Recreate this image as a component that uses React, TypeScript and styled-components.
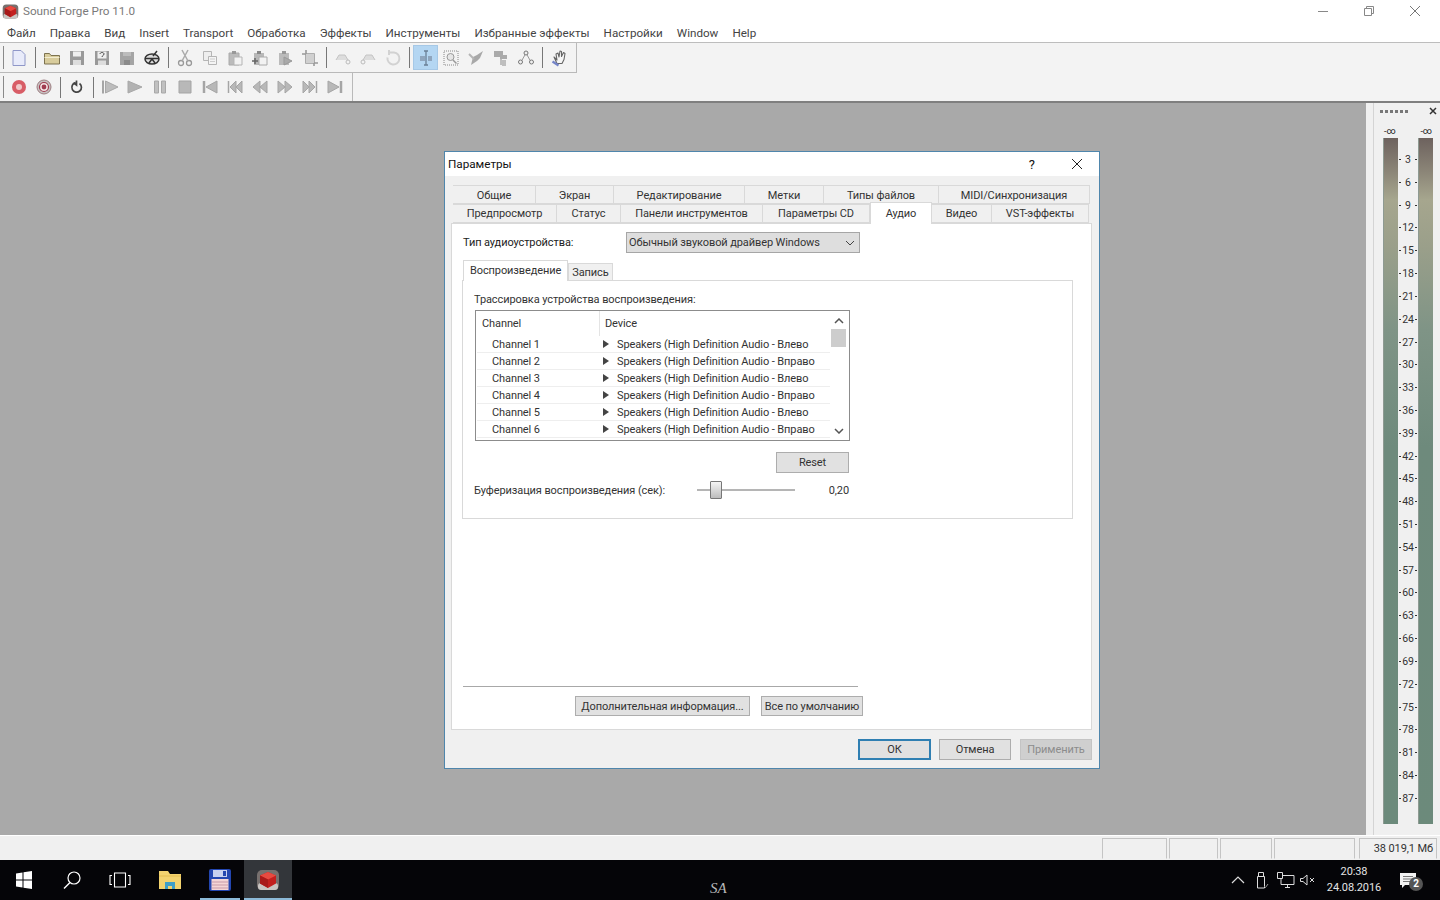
import * as React from 'react'
import styled, { createGlobalStyle } from 'styled-components'

const UI_FONT = `Roboto, "Noto Sans", "Liberation Sans", sans-serif`

const MENU = ['Файл', 'Правка', 'Вид', 'Insert', 'Transport', 'Обработка', 'Эффекты', 'Инструменты', 'Избранные эффекты', 'Настройки', 'Window', 'Help']

const TABS_TOP = [
  { label: 'Общие', width: 83 },
  { label: 'Экран', width: 78 },
  { label: 'Редактирование', width: 131 },
  { label: 'Метки', width: 79 },
  { label: 'Типы файлов', width: 115 },
  { label: 'MIDI/Синхронизация', width: 151 }
]

const TABS_BOTTOM = [
  { label: 'Предпросмотр', width: 104 },
  { label: 'Статус', width: 64 },
  { label: 'Панели инструментов', width: 142 },
  { label: 'Параметры CD', width: 107 },
  { label: 'Аудио', width: 62, active: true },
  { label: 'Видео', width: 60 },
  { label: 'VST-эффекты', width: 97 }
]

const CHANNELS = [
  ['Channel 1', 'Влево'],
  ['Channel 2', 'Вправо'],
  ['Channel 3', 'Влево'],
  ['Channel 4', 'Вправо'],
  ['Channel 5', 'Влево'],
  ['Channel 6', 'Вправо']
]

const SCALE = Array.from({ length: 29 }, (_, i) => (i + 1) * 3)

const GLYPHS: Record<string, React.ReactNode> = {
  new: <path d="M3 1.500h8l4 4v11H3z" fill="#e8ebfa" stroke="#8f97c8" />,
  open: <><path d="M1.500 15V4.500h5l1.500 2h8.500V15z" fill="#d8cc9c" stroke="#7d7350" /><path d="M1.500 8.500h15" stroke="#f2ecd0" /></>,
  save: <><path d="M2 2h14v14H2z" fill="#999" /><path d="M5 2.500h8v5H5z" fill="#eee" /><path d="M5 11h8v5H5z" fill="#ddd" /></>,
  saveq: <><path d="M2 2h14v14H2z" fill="#999" /><path d="M4.500 2.500h9v7h-9z" fill="#eee" /><path d="M7 5c0-2 4-2 4 0 0 1.500-2 1.500-2 3" fill="none" stroke="#444" /><path d="M5 11.500h8V16H5z" fill="#ddd" /></>,
  saveall: <><path d="M2 3h14v13H2z" fill="#a4a4a4" /><path d="M5 3h8v4H5z" fill="#bcbcbc" /><path d="M6 11h6v5H6z" fill="#8a8a8a" /></>,
  render: <><ellipse cx="9" cy="10" rx="7" ry="5" fill="#ddd" stroke="#333" strokeWidth="1.500" /><path d="M2 9.500h14M6 14l3-4 3 4M10 7l4-5" fill="none" stroke="#333" strokeWidth="1.500" /></>,
  cut: <><circle cx="5" cy="14" r="2.500" fill="none" stroke="#999" strokeWidth="1.300" /><circle cx="13" cy="14" r="2.500" fill="none" stroke="#999" strokeWidth="1.300" /><path d="M6 12L12 1M12 12L6 1" stroke="#aaa" strokeWidth="1.500" /></>,
  copy: <><path d="M2.500 2.500h8v9h-8z" fill="#eee" stroke="#b5b5b5" /><path d="M7.500 7.500h8v8h-8z" fill="#f4f4f4" stroke="#b5b5b5" /><path d="M9 10h5M9 12.500h5" stroke="#ccc" /></>,
  paste: <><path d="M3 4h10v12H3z" fill="#bbb" stroke="#aaa" /><path d="M6 2h4v3H6z" fill="#999" /><path d="M8 8h8v8H8z" fill="#f2f2f2" stroke="#b5b5b5" /></>,
  pastenew: <><path d="M3 4h10v12H3z" fill="#b8b8b8" /><path d="M6 2h4v3H6z" fill="#888" /><path d="M8 8h8v8H8z" fill="#f2f2f2" stroke="#aaa" /><path d="M1 12h6M4 9v6" stroke="#666" strokeWidth="1.500" /></>,
  pastemix: <><path d="M3 4h10v12H3z" fill="#bbb" /><path d="M6 2h4v3H6z" fill="#999" /><path d="M8 8l8 4-8 4z" fill="#aaa" stroke="#999" /></>,
  crop: <><path d="M5 1v13h12M1 5h12v12" fill="none" stroke="#999" strokeWidth="1.600" /><path d="M5 5h8v9H5z" fill="#d0d0d0" /></>,
  undo: <><path d="M2 11l3-5h6l3 5" fill="#ddd" stroke="#c4c4c4" /><circle cx="14" cy="13" r="2" fill="none" stroke="#bbb" /></>,
  redo: <><path d="M4 11l3-5h6l3 5" fill="#ddd" stroke="#c4c4c4" /><circle cx="4" cy="13" r="2" fill="none" stroke="#bbb" /></>,
  refresh: <path d="M5 3.500h5a6 6 0 1 1-6.500 5M5 1v5" fill="none" stroke="#d2d2d2" strokeWidth="2" />,
  edit: <><path d="M3 7h5v5H3z" fill="#8fa5bd" /><path d="M9 2v14M7 2h4M7 16h4" stroke="#6a7f95" strokeWidth="1.300" /><path d="M11 7h4v5h-4z" fill="#8fa5bd" /></>,
  zoom: <><path d="M2 2h14v14H2z" fill="none" stroke="#888" strokeDasharray="1 1" /><circle cx="8.500" cy="8" r="3.500" fill="#e6e6e6" stroke="#999" /><path d="M11 11l3.500 3.500" stroke="#999" strokeWidth="1.500" /></>,
  pencil: <><path d="M4 16l2-8 4-2 6-4-3 7-3 3z" fill="#a8a8a8" /><path d="M2 5l5 5" stroke="#b5b5b5" strokeWidth="2" /></>,
  event: <><path d="M2 2h9v4h4v4H8v-2H2z" fill="#aaa" /><path d="M9 10v6M11 11v6M13 11v6" stroke="#8a8a8a" /></>,
  envelope: <><path d="M4 13L9 4l5 9" fill="none" stroke="#999" /><circle cx="9" cy="4" r="2" fill="#f0f0f0" stroke="#777" /><circle cx="3.500" cy="13" r="2" fill="#f0f0f0" stroke="#777" /><circle cx="14.500" cy="13" r="2" fill="#f0f0f0" stroke="#777" /></>,
  hand: <><path d="M4 8l3 3-1-6 2-1 1 4 1-6 1.500.5v5l2-4 1.500 1-1 6-2 4H7z" fill="#f6f6f6" stroke="#666" strokeWidth="1.100" strokeLinejoin="round" /><path d="M2.500 12.500l6 4" stroke="#7484c8" strokeWidth="2.200" /></>,
  rec: <><circle cx="9" cy="9" r="7" fill="#d85d66" /><circle cx="9" cy="9" r="3" fill="#f0c8c8" /></>,
  recarm: <><circle cx="9" cy="9" r="7" fill="#c7c0c0" stroke="#9d7f82" /><circle cx="9" cy="9" r="4.500" fill="#f2e4e4" stroke="#a03c50" strokeWidth="1.200" /><circle cx="9" cy="9" r="2.400" fill="#a03c50" /></>,
  loop: <path d="M11.500 5.500a4.800 4.800 0 1 1-4-.8M8.500 2.500v4.500l-3-2.200" fill="none" stroke="#444" strokeWidth="1.700" />,
  playstart: <><path d="M2 2.500v13" stroke="#a5a5a5" strokeWidth="2" /><path d="M4.500 3L17 9 4.500 15z" fill="#bcbcbc" stroke="#a8a8a8" /></>,
  play: <path d="M2 3l14 6-14 6z" fill="#b2b2b2" stroke="#a8a8a8" />,
  pause: <><path d="M3.500 3h4v12h-4zM10.500 3h4v12h-4z" fill="#c0c0c0" stroke="#a8a8a8" /></>,
  stop: <path d="M3 3h12v12H3z" fill="#b8b8b8" stroke="#a5a5a5" />,
  start: <><path d="M3 3v12" stroke="#a5a5a5" strokeWidth="2.500" /><path d="M16 3L5 9l11 6z" fill="#b8b8b8" stroke="#a5a5a5" /></>,
  prev: <><path d="M2.500 3v12" stroke="#a5a5a5" strokeWidth="1.500" /><path d="M10 3L4 9l6 6zM16 3l-6 6 6 6z" fill="#b8b8b8" stroke="#a5a5a5" /></>,
  rew: <path d="M9 3L2 9l7 6zM16 3L9 9l7 6z" fill="#b8b8b8" stroke="#a5a5a5" />,
  ff: <path d="M2 3l7 6-7 6zM9 3l7 6-7 6z" fill="#b8b8b8" stroke="#a5a5a5" />,
  next: <><path d="M15.500 3v12" stroke="#a5a5a5" strokeWidth="1.500" /><path d="M2 3l6 6-6 6zM8 3l6 6-6 6z" fill="#b8b8b8" stroke="#a5a5a5" /></>,
  end: <><path d="M15 3v12" stroke="#a5a5a5" strokeWidth="2.500" /><path d="M2 3l11 6-11 6z" fill="#b8b8b8" stroke="#a5a5a5" /></>
}

const GlobalStyle = createGlobalStyle`
  html, body {
    margin: 0;
    height: 100%;
    overflow: hidden;
    background: #f0f0f0;
  }
  * {
    box-sizing: border-box;
  }
`

function ToolIcon ({ name }: { name: string }) {
  return <svg width="18" height="18" viewBox="0 0 18 18">{GLYPHS[name]}</svg>
}

function Tools ({ names }: { names: string[] }) {
  return (
    <>
      {names.map((name, i) => name === '|'
        ? <ToolSeparator key={i} />
        : <ToolButton key={i} $active={name === 'edit'}><ToolIcon name={name} /></ToolButton>)}
    </>
  )
}

function AppLogo ({ size }: { size: number }) {
  return (
    <svg width={size} height={size} viewBox="0 0 24 24">
      <rect x="1" y="2" width="22" height="20" rx="5" fill="#77706e" />
      <rect x="2" y="15" width="20" height="7" rx="3" fill="#c9c5c2" />
      <path d="M12 4l8 3.500v8L12 20l-8-4.500v-8z" fill="#c3201f" />
      <path d="M12 4l8 3.500-8 4-8-4z" fill="#e84a40" />
      <path d="M12 11.500V20l-8-4.500v-8z" fill="#a81a1a" />
    </svg>
  )
}

function App () {
  return (
    <Screen>
      <GlobalStyle />
      <TitleBar>
        <AppLogo size={17} />
        <AppTitle>Sound Forge Pro 11.0</AppTitle>
        <WindowControls>
          <WindowControl>
            <svg width="12" height="12" viewBox="0 0 12 12"><path d="M1 6.500h10" stroke="#888" /></svg>
          </WindowControl>
          <WindowControl>
            <svg width="12" height="12" viewBox="0 0 12 12"><path d="M1.500 3.500h7v7h-7zM3.500 3.500v-2h7v7h-2" fill="none" stroke="#888" /></svg>
          </WindowControl>
          <WindowControl>
            <svg width="12" height="12" viewBox="0 0 12 12"><path d="M1 1l10 10M11 1L1 11" stroke="#777" /></svg>
          </WindowControl>
        </WindowControls>
      </TitleBar>
      <MenuBar>
        {MENU.map(item => <MenuItem key={item}>{item}</MenuItem>)}
      </MenuBar>
      <ToolArea>
        <ToolRow>
          <ToolBand $width={577} $height={30}>
            <Grip />
            <Tools names={['new', '|', 'open', 'save', 'saveq', 'saveall', 'render', '|', 'cut', 'copy', 'paste', 'pastenew', 'pastemix', 'crop', '|', 'undo', 'redo', 'refresh', '|', 'edit', 'zoom', 'pencil', 'event', 'envelope', '|', 'hand']} />
          </ToolBand>
        </ToolRow>
        <ToolRow>
          <ToolBand $width={353} $height={28} $last>
            <Grip />
            <Tools names={['rec', 'recarm', '|', 'loop', '|', 'playstart', 'play', 'pause', 'stop', 'start', 'prev', 'rew', 'ff', 'next', 'end']} />
          </ToolBand>
        </ToolRow>
      </ToolArea>
      <Main>
        <Workspace>
          <Dialog>
            <DialogTitle>
              <span>Параметры</span>
              <DialogHelp>?</DialogHelp>
              <svg width="12" height="12" viewBox="0 0 12 12"><path d="M1 1l10 10M11 1L1 11" stroke="#222" /></svg>
            </DialogTitle>
            <DialogBody>
              <TabStrip>
                <TabRow>
                  {TABS_TOP.map(tab => <Tab key={tab.label} $width={tab.width}>{tab.label}</Tab>)}
                </TabRow>
                <TabRow>
                  {TABS_BOTTOM.map(tab => <Tab key={tab.label} $width={tab.width} $active={tab.active}>{tab.label}</Tab>)}
                </TabRow>
              </TabStrip>
              <TabPage>
                <DeviceRow>
                  <DeviceLabel>Тип аудиоустройства:</DeviceLabel>
                  <Select>
                    Обычный звуковой драйвер Windows
                    <svg width="10" height="6" viewBox="0 0 10 6"><path d="M1 1l4 4 4-4" fill="none" stroke="#444" /></svg>
                  </Select>
                </DeviceRow>
                <SubTabs>
                  <SubTab $active>Воспроизведение</SubTab>
                  <SubTab>Запись</SubTab>
                </SubTabs>
                <Group>
                  <span>Трассировка устройства воспроизведения:</span>
                  <ChannelList>
                    <ChannelTable>
                      <ChannelHeader>
                        <span>Channel</span>
                        <span>Device</span>
                      </ChannelHeader>
                      {CHANNELS.map(([channel, side]) => (
                        <ChannelRow key={channel}>
                          <span>{channel}</span>
                          <DeviceCell>
                            <svg width="6" height="8" viewBox="0 0 6 8"><path d="M0 0l6 4-6 4z" fill="#444" /></svg>
                            <span>Speakers (High Definition Audio - {side}</span>
                          </DeviceCell>
                        </ChannelRow>
                      ))}
                    </ChannelTable>
                    <Scrollbar>
                      <svg width="10" height="6" viewBox="0 0 10 6"><path d="M1 5l4-4 4 4" fill="none" stroke="#555" strokeWidth="1.500" /></svg>
                      <ScrollThumb />
                      <svg width="10" height="6" viewBox="0 0 10 6"><path d="M1 1l4 4 4-4" fill="none" stroke="#555" strokeWidth="1.500" /></svg>
                    </Scrollbar>
                  </ChannelList>
                  <ResetRow>
                    <GreyButton $width={73} $height={21}>Reset</GreyButton>
                  </ResetRow>
                  <BufferRow>
                    <BufferLabel>Буферизация воспроизведения (сек):</BufferLabel>
                    <SliderTrack><SliderThumb /></SliderTrack>
                    <BufferValue>0,20</BufferValue>
                  </BufferRow>
                </Group>
                <PageFooter>
                  <GreyButton $width={175} $height={20}>Дополнительная информация...</GreyButton>
                  <GreyButton $width={102} $height={20}>Все по умолчанию</GreyButton>
                </PageFooter>
              </TabPage>
              <DialogButtons>
                <DialogButton $primary>ОК</DialogButton>
                <DialogButton>Отмена</DialogButton>
                <DialogButton $disabled>Применить</DialogButton>
              </DialogButtons>
            </DialogBody>
          </Dialog>
        </Workspace>
        <MeterPanel>
          <MeterHead>
            <MeterGrip />
            <svg width="8" height="8" viewBox="0 0 8 8"><path d="M1 1l6 6M7 1L1 7" stroke="#333" strokeWidth="1.500" /></svg>
          </MeterHead>
          <MeterLabels>
            <span>-∞</span>
            <span>-∞</span>
          </MeterLabels>
          <Meters>
            <MeterBar />
            <Scale>
              {SCALE.map(value => <Tick key={value}>{value}</Tick>)}
            </Scale>
            <MeterBar />
          </Meters>
        </MeterPanel>
      </Main>
      <StatusBar>
        <StatusCell $width={65} />
        <StatusCell $width={49} />
        <StatusCell $width={52} />
        <StatusCell $width={81} />
        <StatusCell $width={78} $spaced>38 019,1 Мб</StatusCell>
      </StatusBar>
      <Taskbar>
        <TaskSlot>
          <svg width="20" height="20" viewBox="0 0 20 20"><path d="M2 3.500l6.500-1v7H2zM9.500 2.300L18 1v8.500H9.500zM2 10.500h6.500v7l-6.500-1zM9.500 10.500H18V19l-8.500-1.300z" fill="#fff" /></svg>
        </TaskSlot>
        <TaskSlot>
          <svg width="20" height="20" viewBox="0 0 20 20"><circle cx="12" cy="8" r="6" fill="none" stroke="#fff" strokeWidth="1.200" /><path d="M8 12.500L2 18.500" stroke="#fff" strokeWidth="1.500" /></svg>
        </TaskSlot>
        <TaskSlot>
          <svg width="22" height="16" viewBox="0 0 22 16"><path d="M5.500 1h11v14h-11zM3 3.500H1v9h2M19 3.500h2v9h-2" fill="none" stroke="#fff" strokeWidth="1.100" /></svg>
        </TaskSlot>
        <TaskSlot $marginLeft={2}>
          <svg width="24" height="20" viewBox="0 0 24 20"><path d="M1 1h9l2 3h11v15H1z" fill="#f3d36f" /><path d="M1 6h22" stroke="#e4bd50" /><path d="M7 19v-7h10v7h-3v-3h-4v3z" fill="#3f9fc8" /></svg>
        </TaskSlot>
        <TaskSlot $running $marginLeft={2}>
          <svg width="24" height="24" viewBox="0 0 24 24"><rect x="1" y="1" width="22" height="22" rx="2" fill="#2346b0" /><path d="M5 2h14v7H5z" fill="#c7d0ef" /><path d="M15 3h3v5h-3z" fill="#2346b0" /><path d="M3.500 11h17v11h-17z" fill="#f4d6d6" /><path d="M4 14h16M4 17h16M4 20h16" stroke="#c79aa8" /></svg>
        </TaskSlot>
        <TaskSlot $running $active>
          <AppLogo size={24} />
        </TaskSlot>
        <Signature>SA</Signature>
        <Tray>
          <TrayIcon>
            <svg width="14" height="8" viewBox="0 0 14 8"><path d="M1 7l6-6 6 6" fill="none" stroke="#ddd" strokeWidth="1.200" /></svg>
          </TrayIcon>
          <TrayIcon>
            <svg width="14" height="18" viewBox="0 0 14 18"><path d="M2.500 5.500h7V17h-7zM3.500 5.500v-4h5v4" fill="none" stroke="#ddd" /><path d="M9 15l1.500 1.500L13 13" fill="none" stroke="#999" /></svg>
          </TrayIcon>
          <TrayIcon>
            <svg width="18" height="16" viewBox="0 0 18 16"><path d="M4 3.500h13v9H4zM8 15.500h5M10.500 12.500v3" fill="none" stroke="#ddd" /><path d="M.5.500h5v6h-5z" fill="#050508" stroke="#ddd" /></svg>
          </TrayIcon>
          <MuteIcon>
            <svg width="16" height="12" viewBox="0 0 16 12"><path d="M.5 4.500h2.500L7 1v10L3 7.500H.5z" fill="none" stroke="#ddd" /><path d="M10 4l4 4M14 4l-4 4" stroke="#ddd" /></svg>
          </MuteIcon>
          <Clock>
            <span>20:38</span>
            <span>24.08.2016</span>
          </Clock>
          <Notice>
            <svg width="16" height="15" viewBox="0 0 16 15"><path d="M0 0h16v12H5l-3 3v-3H0z" fill="#f2f2f2" /><path d="M3 3.500h10M3 6h10M3 8.500h7" stroke="#777" /></svg>
            <NoticeBadge>2</NoticeBadge>
          </Notice>
        </Tray>
      </Taskbar>
    </Screen>
  )
}

const Screen = styled.div`
  display: flex;
  flex-direction: column;
  width: 1440px;
  height: 900px;
  font-family: ${UI_FONT};
  font-size: 11px;
  letter-spacing: -0.1px;
  color: #222;
  background: #f0f0f0;
`

const TitleBar = styled.div`
  display: flex;
  align-items: center;
  height: 22px;
  padding-left: 2px;
  background: #fff;
`

const AppTitle = styled.span`
  margin-left: 4px;
  color: #7a7a7a;
  font-size: 11.700px;
  letter-spacing: 0;
`

const WindowControls = styled.div`
  display: flex;
  margin-left: auto;
  padding-right: 2px;
`

const WindowControl = styled.div`
  display: flex;
  align-items: center;
  justify-content: center;
  width: 46px;
  height: 22px;
`

const MenuBar = styled.div`
  display: flex;
  align-items: center;
  height: 21px;
  padding-top: 1px;
  background: #fff;
  border-bottom: 1px solid #bdbdbd;
`

const MenuItem = styled.span`
  padding: 0 7px;
  color: #444;
  font-size: 11.650px;
  letter-spacing: 0;
`

const ToolArea = styled.div`
  background: #f3f3f3;
  border-bottom: 2px solid #7f7f7f;
`

const ToolRow = styled.div`
  display: flex;
`

const ToolBand = styled.div<{ $width: number, $height: number, $last?: boolean }>`
  display: flex;
  align-items: center;
  width: ${p => p.$width}px;
  height: ${p => p.$height}px;
  padding-left: 6px;
  border-right: 1px solid #b9b9b9;
  border-bottom: ${p => p.$last ? 'none' : '1px solid #b9b9b9'};
  position: relative;
`

const Grip = styled.div`
  position: absolute;
  left: 3px;
  top: 3px;
  bottom: 3px;
  width: 2px;
  border-left: 1px solid #8a8a8a;
`

const ToolButton = styled.div<{ $active?: boolean }>`
  display: flex;
  align-items: center;
  justify-content: center;
  width: 25px;
  height: 25px;
  background: ${p => p.$active ? '#b4d6f2' : 'transparent'};
  outline: ${p => p.$active ? '1px solid #a6c8e6' : 'none'};
  outline-offset: -1px;
`

const ToolSeparator = styled.div`
  width: 8px;
  height: 21px;
  background: linear-gradient(#777, #777) center / 1px 100% no-repeat;
`

const Main = styled.div`
  display: flex;
  flex: 1;
  min-height: 0;
  border-bottom: 1px solid #fff;
`

const Workspace = styled.div`
  position: relative;
  width: 1366px;
  background: #a9a9a9;
`

const Dialog = styled.div`
  position: absolute;
  left: 444px;
  top: 48px;
  display: flex;
  flex-direction: column;
  width: 656px;
  height: 618px;
  background: #f0f0f0;
  border: 1px solid #4f86ac;
`

const DialogTitle = styled.div`
  display: flex;
  align-items: center;
  height: 24px;
  padding: 0 16px 0 3px;
  background: #fff;
  color: #111;
  font-size: 11.700px;
  letter-spacing: 0;
`

const DialogHelp = styled.span`
  margin-left: auto;
  margin-right: 36px;
  font-size: 13px;
`

const DialogBody = styled.div`
  display: flex;
  flex-direction: column;
  flex: 1;
  padding: 10px 7px 0 6px;
`

const TabStrip = styled.div`
  display: flex;
  flex-direction: column;
  height: 37px;
  padding-left: 2px;
`

const TabRow = styled.div`
  display: flex;
  align-items: flex-end;
  height: 18px;
  &:first-child > div {
    padding-top: 2px;
  }
  &:last-child {
    height: 19px;
  }
`

const Tab = styled.div<{ $width: number, $active?: boolean }>`
  position: relative;
  z-index: ${p => p.$active ? 2 : 0};
  display: flex;
  align-items: center;
  justify-content: center;
  flex: none;
  width: ${p => p.$width}px;
  height: ${p => p.$active ? 22 : 19}px;
  margin-bottom: ${p => p.$active ? -1 : 0}px;
  background: ${p => p.$active ? '#fff' : '#f0f0f0'};
  border: 1px solid #d9d9d9;
  border-left-width: ${p => p.$active ? 1 : 0}px;
  border-bottom-width: ${p => p.$active ? 0 : 1}px;
  color: #333;
  white-space: nowrap;
`

const TabPage = styled.div`
  display: flex;
  flex-direction: column;
  height: 507px;
  padding: 8px 11px 13px;
  background: #fff;
  border: 1px solid #d9d9d9;
`

const DeviceRow = styled.div`
  display: flex;
  align-items: center;
`

const DeviceLabel = styled.span`
  width: 163px;
`

const Select = styled.div`
  display: flex;
  align-items: center;
  justify-content: space-between;
  width: 234px;
  height: 21px;
  padding: 0 4px 0 2px;
  background: #dedede;
  border: 1px solid #a6a6a6;
  color: #333;
`

const SubTabs = styled.div`
  display: flex;
  align-items: flex-end;
  height: 21px;
  margin-top: 7px;
  position: relative;
  z-index: 1;
`

const SubTab = styled.div<{ $active?: boolean }>`
  display: flex;
  align-items: center;
  height: ${p => p.$active ? 21 : 18}px;
  padding: ${p => p.$active ? '0 6px 2px' : '0 3px'};
  background: ${p => p.$active ? '#fff' : '#f0f0f0'};
  border: 1px solid #d9d9d9;
  border-bottom-width: ${p => p.$active ? 0 : 1}px;
  color: #333;
`

const Group = styled.div`
  display: flex;
  flex-direction: column;
  width: 611px;
  height: 239px;
  margin: -1px 0 0 -1px;
  padding: 12px 11px 0;
  border: 1px solid #d9d9d9;
  color: #333;
`

const ChannelList = styled.div`
  display: flex;
  flex: none;
  width: 375px;
  height: 131px;
  margin: 4px 0 0 1px;
  padding: 0 2px 0 1px;
  border: 1px solid #8c8c8c;
`

const ChannelTable = styled.div`
  flex: 1;
  min-width: 0;
`

const ChannelHeader = styled.div`
  display: grid;
  grid-template-columns: 123px 1fr;
  align-items: center;
  height: 25px;
  & > span {
    padding-left: 5px;
    height: 25px;
    line-height: 25px;
  }
  & > span:first-child {
    border-right: 1px solid #e4e4e4;
  }
`

const ChannelRow = styled.div`
  display: grid;
  grid-template-columns: 108px 1fr;
  align-items: center;
  height: 17px;
  padding-left: 15px;
  border-bottom: 1px solid #eee;
  white-space: nowrap;
`

const DeviceCell = styled.div`
  display: flex;
  align-items: center;
  gap: 8px;
  padding-left: 3px;
`

const Scrollbar = styled.div`
  display: flex;
  flex-direction: column;
  align-items: center;
  flex: none;
  width: 17px;
  padding-top: 7px;
  height: 123px;
`

const ScrollThumb = styled.div`
  width: 15px;
  height: 18px;
  margin: 5px 0 auto;
  background: #cdcdcd;
`

const ResetRow = styled.div`
  display: flex;
  justify-content: flex-end;
  width: 375px;
  margin-top: 11px;
`

const GreyButton = styled.div<{ $width: number, $height: number }>`
  display: flex;
  align-items: center;
  justify-content: center;
  flex: none;
  width: ${p => p.$width}px;
  height: ${p => p.$height}px;
  background: #e1e1e1;
  border: 1px solid #adadad;
  color: #333;
  white-space: nowrap;
`

const BufferRow = styled.div`
  display: flex;
  align-items: center;
  width: 375px;
  height: 18px;
  margin-top: 8px;
`

const BufferLabel = styled.span`
  width: 223px;
`

const SliderTrack = styled.div`
  position: relative;
  width: 98px;
  height: 2px;
  background: #b5b5b5;
`

const SliderThumb = styled.div`
  position: absolute;
  left: 13px;
  top: -8px;
  width: 12px;
  height: 18px;
  background: linear-gradient(#f4f4f4, #bcbcbc);
  border: 1px solid #777;
  border-radius: 1px;
`

const BufferValue = styled.span`
  margin-left: auto;
`

const PageFooter = styled.div`
  display: flex;
  gap: 11px;
  width: 400px;
  margin-top: auto;
  padding: 10px 0 0 112px;
  background: linear-gradient(#a8a8a8, #a8a8a8) left top / 395px 1px no-repeat;
`

const DialogButtons = styled.div`
  display: flex;
  justify-content: flex-end;
  padding-top: 9px;
`

const DialogButton = styled.div<{ $primary?: boolean, $disabled?: boolean }>`
  display: flex;
  align-items: center;
  justify-content: center;
  width: ${p => p.$primary ? 73 : 72}px;
  height: 21px;
  margin-left: ${p => p.$disabled ? 9 : p.$primary ? 0 : 8}px;
  background: ${p => p.$disabled ? '#cfcfcf' : '#e1e1e1'};
  border: ${p => p.$primary ? '2px solid #2f7fb2' : `1px solid ${p.$disabled ? '#c4c4c4' : '#adadad'}`};
  color: ${p => p.$disabled ? '#8c8c8c' : '#333'};
`

const MeterPanel = styled.div`
  display: flex;
  flex-direction: column;
  flex: 1;
  margin-left: 7px;
  padding-left: 9px;
  border-left: 1px solid #d4d4d4;
`

const MeterHead = styled.div`
  display: flex;
  align-items: center;
  justify-content: space-between;
  height: 16px;
  padding: 0 3px 0 0;
`

const MeterGrip = styled.div`
  width: 30px;
  height: 3px;
  margin-left: -3px;
  background: repeating-linear-gradient(90deg, #777 0 3px, transparent 3px 5px);
`

const MeterLabels = styled.div`
  display: flex;
  justify-content: space-between;
  width: 50px;
  height: 19px;
  padding: 6px 1px 0;
  font-size: 9px;
  line-height: 12px;
  color: #222;
`

const Meters = styled.div`
  display: grid;
  grid-template-columns: 15px 20px 15px;
  width: 50px;
  height: 686px;
`

const MeterBar = styled.div`
  background: linear-gradient(#6d625e 0, #8c8678 5%, #a6a68e 9%, #9a9f8a 16%, #7f9486 28%, #6e8a7c 45%, #6c8a7b 100%);
  border-left: 1px solid #8e9a92;
`

const Scale = styled.div`
  display: flex;
  flex-direction: column;
  padding-top: 10.100px;
`

const Tick = styled.div`
  display: flex;
  align-items: center;
  justify-content: space-between;
  flex: none;
  height: 22.820px;
  padding: 0 1px;
  font-size: 10.500px;
  color: #333;
  &::before, &::after {
    content: '';
    width: 2px;
    height: 1px;
    background: #333;
  }
`

const StatusBar = styled.div`
  display: flex;
  align-items: center;
  justify-content: flex-end;
  gap: 2px;
  height: 24px;
  padding-right: 3px;
`

const StatusCell = styled.div<{ $width: number, $spaced?: boolean }>`
  width: ${p => p.$width}px;
  height: 21px;
  margin-left: ${p => p.$spaced ? 2 : 0}px;
  padding-right: 3px;
  border: 1px solid #c4c4c4;
  border-bottom-color: #f0f0f0;
  line-height: 19px;
  text-align: right;
  color: #333;
`

const Taskbar = styled.div`
  position: relative;
  display: flex;
  height: 40px;
  background: #050508;
  color: #e4e4e4;
`

const TaskSlot = styled.div<{ $running?: boolean, $active?: boolean, $marginLeft?: number }>`
  position: relative;
  display: flex;
  align-items: center;
  justify-content: center;
  width: 48px;
  margin-left: ${p => p.$marginLeft || 0}px;
  background: ${p => p.$active ? '#33363a' : 'transparent'};
  &::after {
    content: '';
    display: ${p => p.$running ? 'block' : 'none'};
    position: absolute;
    left: ${p => p.$active ? 0 : 4}px;
    right: ${p => p.$active ? 0 : 4}px;
    bottom: 0;
    height: 2px;
    background: #8cbad8;
  }
`

const Signature = styled.span`
  position: absolute;
  left: 710px;
  top: 20px;
  font-family: "Liberation Serif", serif;
  font-style: italic;
  font-size: 15px;
  letter-spacing: 0;
  color: #b8b8b8;
`

const Tray = styled.div`
  display: flex;
  align-items: center;
  margin-left: auto;
  padding-right: 8px;
`

const TrayIcon = styled.div`
  display: flex;
  align-items: center;
  justify-content: center;
  width: 24px;
`

const MuteIcon = styled(TrayIcon)`
  width: 20px;
`

const Clock = styled.div`
  display: flex;
  flex-direction: column;
  align-items: center;
  gap: 3px;
  width: 62px;
  margin-left: 5px;
  padding-bottom: 2px;
`

const Notice = styled.div`
  position: relative;
  display: flex;
  justify-content: center;
  width: 47px;
  padding-right: 2px;
`

const NoticeBadge = styled.span`
  position: absolute;
  left: 24px;
  top: 4px;
  width: 14px;
  height: 14px;
  border-radius: 50%;
  background: #555;
  color: #fff;
  font-size: 10px;
  font-weight: 700;
  line-height: 14px;
  text-align: center;
`

export default App
